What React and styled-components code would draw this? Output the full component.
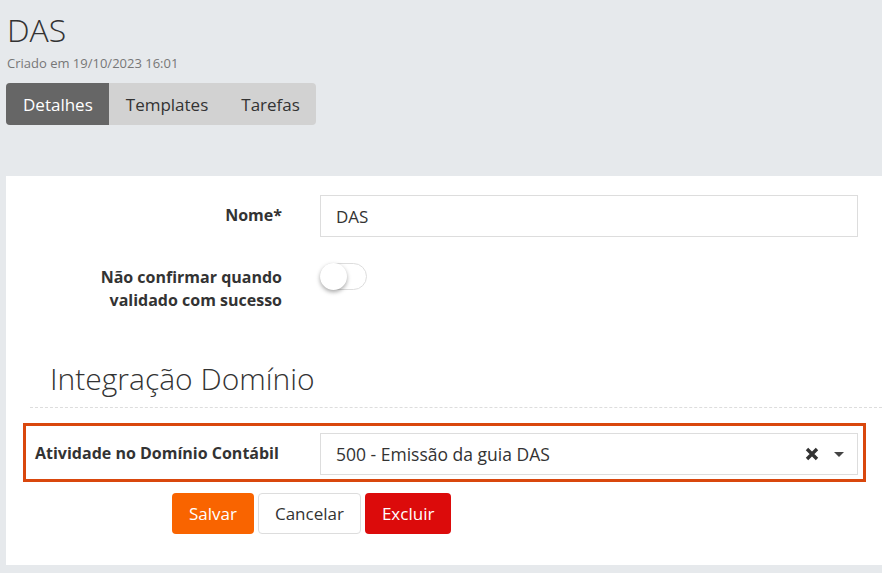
import React, { useState } from 'react'
import styled, { createGlobalStyle } from 'styled-components'

/***** Component style *****/
const GlobalStyle = createGlobalStyle`
	html, body {
		margin:0;
		padding:0;
		background-color:#e6e9ec;
		font-family:"Open Sans", "Liberation Sans", sans-serif;
		color:#333;
	}
	* { box-sizing:border-box; }
`
const Page = styled.div`
	min-height:573px;
	padding-bottom:8px;
`
const Header = styled.div`
	padding:10px 7px 0 7px;
`
const Title = styled.h1`
	margin:0;
	font-size:32px;
	font-weight:300;
	line-height:40px;
	color:#333;
`
const Created = styled.div`
	font-size:13px;
	line-height:18px;
	color:#777;
	margin-top:4px;
`
const Tabs = styled.div`
	display:inline-flex;
	margin:11px 0 0 -1px;
	background-color:#d2d2d2;
	border-radius:4px;
	overflow:hidden;
`
const Tab = styled.div`
	height:42px;
	padding:0 16px 0 17px;
	display:flex;
	align-items:center;
	font-size:17px;
	cursor:pointer;
	color:${props => props.$active ? '#fff' : '#333'};
	background-color:${props => props.$active ? '#666' : 'transparent'};
`
const Panel = styled.div`
	margin:51px 0 0 6px;
	background-color:#fff;
	padding:19px 0 31px 0;
`
const Row = styled.div`
	display:grid;
	grid-template-columns:314px 1fr;
	padding-right:24px;
	margin-bottom:${props => props.$mb || '0'};
`
const Label = styled.label`
	text-align:right;
	padding:${props => props.$pt || '0'} 38px 0 40px;
	font-size:16px;
	font-weight:700;
	line-height:23px;
	color:#333;
`
const Input = styled.input`
	height:42px;
	width:100%;
	border:1px solid #ddd;
	padding:0 15px;
	font-family:inherit;
	font-size:17px;
	color:#333;
	outline:none;
`
const Track = styled.div`
	width:47px;
	height:27px;
	border:1px solid #ddd;
	border-radius:14px;
	position:relative;
	cursor:pointer;
	& div {
		position:absolute;
		top:-1px;
		left:${props => props.$on ? '19px' : '-1px'};
		width:27px;
		height:27px;
		border-radius:50%;
		background-color:#fff;
		box-shadow:0 2px 4px rgba(0,0,0,.35);
	}
`
const SectionTitle = styled.h2`
	margin:47px 0 0 44px;
	font-size:30px;
	font-weight:300;
	line-height:40px;
	color:#333;
`
const Divider = styled.div`
	margin:8px 0 0 24px;
	border-top:1px dashed #ddd;
`
const Highlight = styled.div`
	margin:15px 16px 0 17px;
	border:3px solid #d9470d;
	padding:7px 5px 4px 9px;
	display:grid;
	grid-template-columns:285px 1fr;
	align-items:center;
`
const LeftLabel = styled.label`
	font-size:16px;
	font-weight:700;
	line-height:23px;
	color:#333;
	margin-top:-2px;
`
const Select = styled.div`
	height:42px;
	border:1px solid #ddd;
	display:flex;
	align-items:center;
	padding:0 12px 0 15px;
	font-size:17.5px;
	color:#333;
	& span { flex:1; }
	& svg { flex:none; }
`
const Buttons = styled.div`
	display:flex;
	gap:4px;
	padding:11px 0 0 166px;
`
const Button = styled.button`
	height:41px;
	padding:0 16px;
	border-radius:4px;
	font-family:inherit;
	font-size:17px;
	cursor:pointer;
	border:1px solid ${props => props.$border || 'transparent'};
	background-color:${props => props.$bg || '#fff'};
	color:${props => props.$color || '#fff'};
`
/****** ******************** *****/

const App = () => {

	const [tab, setTab] = useState('Detalhes')
	const [confirm, setConfirm] = useState(false)

	return (
		<Page>
			<GlobalStyle />
			<Header>
				<Title>DAS</Title>
				<Created>Criado em 19/10/2023 16:01</Created>
				<Tabs>
					{['Detalhes', 'Templates', 'Tarefas'].map(t => (
						<Tab key={t} $active={tab === t} onClick={() => setTab(t)}>{t}</Tab>
					))}
				</Tabs>
			</Header>
			<Panel>
				<Row $mb='26px'>
					<Label $pt='9px'>Nome*</Label>
					<Input defaultValue='DAS' />
				</Row>
				<Row>
					<Label $pt='3px'>Não confirmar quando validado com sucesso</Label>
					<div>
						<Track $on={confirm} onClick={() => setConfirm(!confirm)}><div /></Track>
					</div>
				</Row>
				<SectionTitle>Integração Domínio</SectionTitle>
				<Divider />
				<Highlight>
					<LeftLabel>Atividade no Domínio Contábil</LeftLabel>
					<Select>
						<span>500 - Emissão da guia DAS</span>
						<svg width='14' height='14' viewBox='0 0 14 14'>
							<path d='M2 2 L12 12 M12 2 L2 12' stroke='#333' strokeWidth='3.4' strokeLinecap='butt' />
						</svg>
						<svg width='12' height='8' viewBox='0 0 12 8' style={{ marginLeft: 14 }}>
							<path d='M1 2 L11 2 L6 7 Z' fill='#444' />
						</svg>
					</Select>
				</Highlight>
				<Buttons>
					<Button $bg='#f96400'>Salvar</Button>
					<Button $bg='#fff' $color='#333' $border='#ddd'>Cancelar</Button>
					<Button $bg='#dc0b0b'>Excluir</Button>
				</Buttons>
			</Panel>
		</Page>
	)
}

export default App
